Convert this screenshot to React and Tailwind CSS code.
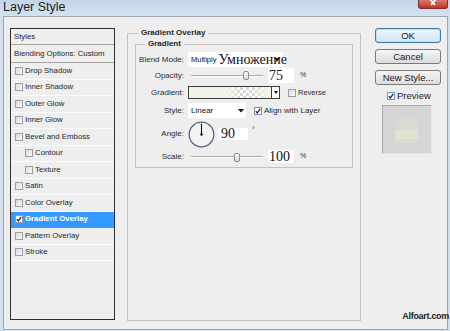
import React from "react";

const effects = [
  { name: "Drop Shadow" },
  { name: "Inner Shadow" },
  { name: "Outer Glow" },
  { name: "Inner Glow" },
  { name: "Bevel and Emboss" },
  { name: "Contour", sub: true },
  { name: "Texture", sub: true },
  { name: "Satin" },
  { name: "Color Overlay" },
  { name: "Gradient Overlay", on: true },
  { name: "Pattern Overlay" },
  { name: "Stroke" },
];

function Check({ checked, blue, white }) {
  return (
    <span
      className={`flex h-[8px] w-[8px] shrink-0 items-center justify-center border ${
        blue ? "border-[#7b92b4]" : "border-[#9d9d9d]"
      } ${white ? "bg-white" : "bg-linear-to-br from-[#d9d9d9] to-[#fafafa]"}`}
    >
      {checked && (
        <svg width="6" height="6" viewBox="0 0 6 6">
          <path d="M0.8 3.1 L2.3 5 L5.3 0.8" fill="none" stroke="#1d2b5a" strokeWidth="1.3" />
        </svg>
      )}
    </span>
  );
}

function Arrow() {
  return (
    <svg width="6" height="4" viewBox="0 0 6 4">
      <path d="M0 0 H6 L3 3.5 Z" fill="#111" />
    </svg>
  );
}

function Label({ children }) {
  return <span className="flex w-[44px] shrink-0 justify-end whitespace-nowrap">{children}</span>;
}

function Slider({ thumb }) {
  return (
    <div className="relative ml-[4px] flex h-full w-[76px] items-center">
      <div className="ml-[3px] h-[2px] w-[72px] border-t border-b border-t-[#a9a9a9] border-b-white" />
      <div
        className={`absolute top-[3px] h-[9px] w-[6px] rounded-[2px] border border-[#8c8c8c] bg-linear-to-b from-white to-[#dadada] ${thumb}`}
      />
    </div>
  );
}

function Value({ children, w = "w-[26px]" }) {
  return (
    <div className={`flex h-full ${w} items-center bg-white pl-[1px] font-['Liberation_Serif',serif] text-[14px] leading-none text-[#111]`}>
      {children}
    </div>
  );
}

function StylesList() {
  return (
    <div className="flex h-[292px] w-[105px] shrink-0 flex-col border border-[#2f2f2f] bg-[#eeeeee] text-[7.8px]">
      <div className="flex h-[16px] items-center border-b border-[#a4a4a4] pl-[3px]">Styles</div>
      <div className="flex h-[18px] items-center border-b border-[#a4a4a4] pl-[3px]">Blending Options: Custom</div>
      {effects.map((e) => (
        <div
          key={e.name}
          className={`flex h-[16.5px] items-center gap-[2px] border-b ${
            e.on ? "border-[#3399ff] bg-[#3399ff] font-bold text-white" : "border-[#fbfbfb]"
          } ${e.sub ? "pl-[14px]" : "pl-[4px]"}`}
        >
          <Check checked={e.on} white={e.on} />
          <span>{e.name}</span>
        </div>
      ))}
    </div>
  );
}

function GradientPanel() {
  return (
    <fieldset className="ml-[12px] h-[293px] w-[234px] shrink-0 border border-[#c2c2c2] px-[7px]">
      <legend className="ml-[3px] px-[3px] font-bold leading-[10px]">Gradient Overlay</legend>
      <fieldset className="mt-[1px] border border-[#c2c2c2] pb-[4px] pl-[4px]">
        <legend className="ml-[5px] px-[3px] font-bold leading-[10px]">Gradient</legend>
        <div className="flex flex-col pt-[3px] text-[#2a2a2a]">
          <div className="flex h-[15px] items-center">
            <Label>Blend Mode:</Label>
            <div className="relative ml-[4px] flex h-full w-[95px] items-center bg-white pl-[3px] whitespace-nowrap">
              <span className="text-[7.5px] text-[#111]">Multiply</span>
              <span className="ml-[2px] font-['Liberation_Serif',serif] text-[14px] leading-none text-[#111]">Умножение</span>
              <span className="absolute right-[3px] top-[6px]">
                <Arrow />
              </span>
            </div>
          </div>

          <div className="mt-[1px] flex h-[15px] items-center">
            <Label>Opacity:</Label>
            <Slider thumb="left-[55px]" />
            <div className="ml-[4px] h-full">
              <Value>75</Value>
            </div>
            <span className="ml-[6px] text-[7px]">%</span>
          </div>

          <div className="mt-[3px] flex h-[13px] items-center">
            <Label>Gradient:</Label>
            <div className="ml-[4px] flex h-full w-[92px] border border-[#3d3d3d]">
              <div className="relative flex-1 bg-[repeating-conic-gradient(#d6d6d6_0_25%,#ffffff_0_50%)] bg-[length:6px_6px]">
                <div className="absolute inset-0 bg-[linear-gradient(to_right,#f1f3e4_0%,#f1f3e4_45%,rgba(241,243,228,0.15)_60%,rgba(241,243,228,0.15)_82%,#f1f3e4_96%)]" />
              </div>
              <div className="flex w-[8px] items-center justify-center border-l border-[#3d3d3d] bg-white">
                <svg width="4" height="3" viewBox="0 0 4 3">
                  <path d="M0 0 H4 L2 3 Z" fill="#111" />
                </svg>
              </div>
            </div>
            <div className="ml-[8px] flex items-center gap-[2px]">
              <Check />
              <span className="text-[7.5px]">Reverse</span>
            </div>
          </div>

          <div className="mt-[4px] flex h-[15px] items-center">
            <Label>Style:</Label>
            <div className="ml-[4px] flex h-full w-[58px] items-center justify-between bg-white pl-[3px] pr-[2px] text-[#111]">
              <span>Linear</span>
              <Arrow />
            </div>
            <div className="ml-[8px] flex items-center gap-[2px]">
              <Check checked blue white />
              <span>Align with Layer</span>
            </div>
          </div>

          <div className="mt-[3px] flex h-[26px] items-center">
            <Label>Angle:</Label>
            <svg className="ml-[4px]" width="27" height="27" viewBox="0 0 27 27">
              <circle cx="13.5" cy="13.5" r="12.3" fill="#f3f3f3" stroke="#56657c" strokeWidth="1.3" />
              <line x1="13.5" y1="13.5" x2="13.5" y2="2.5" stroke="#111" strokeWidth="1.1" />
              <circle cx="13.5" cy="13.5" r="1.2" fill="#111" />
            </svg>
            <div className="ml-[3px] h-[12px]">
              <Value w="w-[30px]">
                <span className="pl-[2px]">90</span>
              </Value>
            </div>
            <span className="ml-[4px] self-start pt-[5px] text-[7px] leading-none">°</span>
          </div>

          <div className="mt-[3px] flex h-[13px] items-center">
            <Label>Scale:</Label>
            <Slider thumb="left-[46px]" />
            <div className="ml-[4px] h-full">
              <Value>100</Value>
            </div>
            <span className="ml-[6px] text-[7px]">%</span>
          </div>
        </div>
      </fieldset>
    </fieldset>
  );
}

function Button({ children, primary }) {
  return (
    <button
      className={`flex h-[15px] w-[66px] items-center justify-center rounded-[3px] border text-[9.5px] leading-none text-[#1a1a1a] ${
        primary
          ? "border-[#3c7bab] bg-linear-to-b from-[#eef6fc] to-[#d2e5f3] shadow-[inset_0_0_0_1px_#b9def6]"
          : "border-[#7a7a7a] bg-linear-to-b from-[#f5f5f5] to-[#dcdcdc]"
      }`}
    >
      {children}
    </button>
  );
}

function Actions() {
  return (
    <div className="ml-[14px] flex w-[66px] shrink-0 flex-col">
      <Button primary>OK</Button>
      <div className="mt-[6px]">
        <Button>Cancel</Button>
      </div>
      <div className="mt-[6px]">
        <Button>New Style...</Button>
      </div>
      <div className="mt-[6px] flex h-[10px] items-center gap-[2px] pl-[12px]">
        <Check checked blue white />
        <span className="text-[9.5px]">Preview</span>
      </div>
      <div className="ml-[7px] mt-[4px] h-[49px] w-[50px] border border-t-[#a8a8a8] border-l-[#a8a8a8] border-r-[#e4e4e4] border-b-[#e4e4e4] bg-[#d5d5d5]">
        <div className="ml-[12px] mt-[12px] h-[25px] w-[23px] bg-[#d9dad4] pt-[12px]">
          <div className="h-[9px] bg-[#e1e3d1]" />
        </div>
      </div>
    </div>
  );
}

export default function App() {
  return (
    <div className="flex h-[331px] w-[450px] flex-col overflow-hidden bg-[#d3dfeb] font-['Liberation_Sans',Arial,sans-serif] text-[8px] text-[#1f1f1f]">
      {/* title bar */}
      <div className="flex h-[16px] shrink-0 items-start justify-between bg-linear-to-b from-[#c2d6e9] to-[#d4e2ef]">
        <span className="pl-[3px] text-[12.5px] leading-[15px] text-[#1c1c1c]">Layer Style</span>
        <div className="mr-[2px] flex h-[9px] w-[30px] justify-center rounded-b-[3px] border border-t-0 border-[#8a2a22] bg-linear-to-b from-[#d97a6c] to-[#bb3326]">
          <svg width="12" height="8" viewBox="0 0 12 8">
            <path d="M2 -2 L8 5 M10 -2 L4 5" stroke="#fff" strokeWidth="1.6" />
          </svg>
        </div>
      </div>

      {/* client area */}
      <div className="relative mb-[1px] ml-[3px] mr-[2px] flex flex-1 items-start border border-[#9ba6b1] bg-[#eeeeee] pl-[6px] pt-[11px]">
        <StylesList />
        <GradientPanel />
        <Actions />
        <span className="absolute bottom-[8px] right-[-2px] text-[9px] font-bold leading-[10px] tracking-[-0.3px] text-[#222]">
          Alfoart.com
        </span>
      </div>
    </div>
  );
}
